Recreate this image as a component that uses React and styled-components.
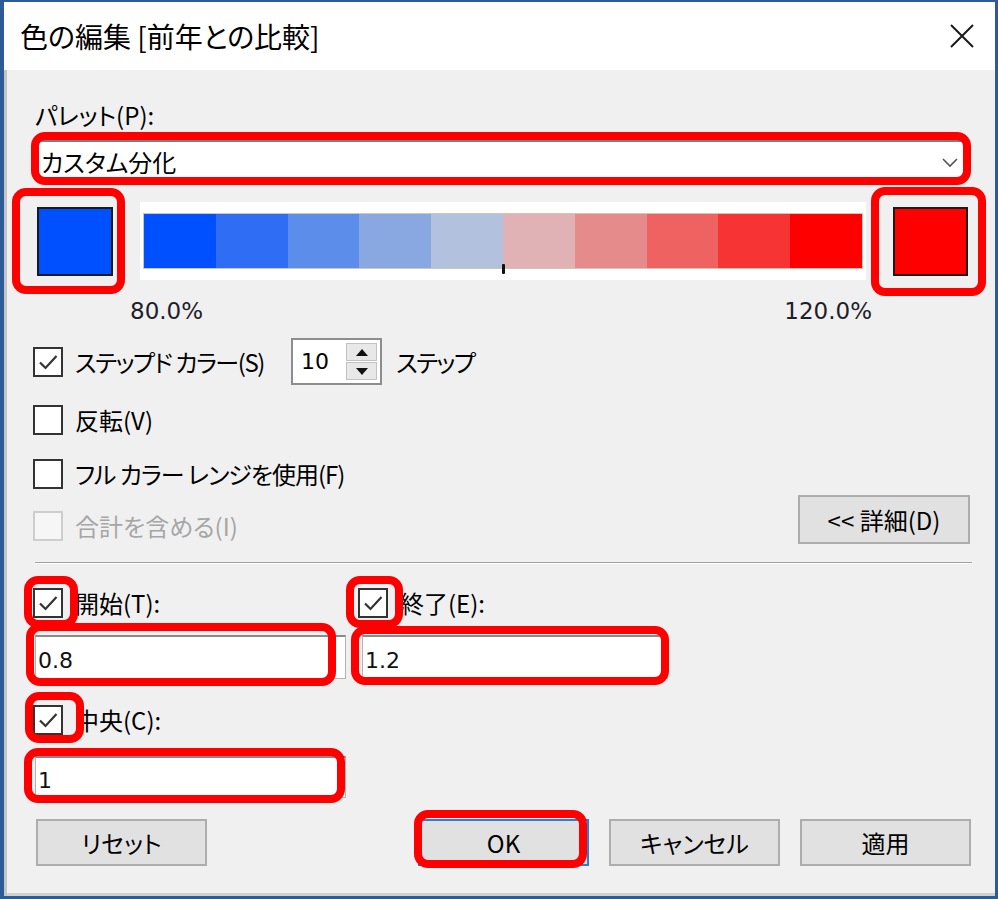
import React from 'react';
import styled, { createGlobalStyle, css } from 'styled-components';

const Global = createGlobalStyle`
  html, body { margin: 0; padding: 0; background: #ffffff; }
  body { font-family: "Noto Sans CJK JP", sans-serif; color: #000; }
  * { box-sizing: border-box; }
`;

const UI_FONT = `"Noto Sans CJK JP", "Noto Sans", sans-serif`;
const NUM_FONT = `"DejaVu Sans", "Noto Sans", sans-serif`;

/* red annotation frame drawn over an element */
const marked = css`
  position: relative;
  ${p => p.$mark && css`
    &::after {
      content: "";
      position: absolute;
      top: ${p.$mark[0]}px;
      right: ${p.$mark[1]}px;
      bottom: ${p.$mark[2]}px;
      left: ${p.$mark[3]}px;
      border: 8px solid #ff0000;
      border-radius: 14px;
      pointer-events: none;
      z-index: 5;
    }
  `}
`;

const Frame = styled.div`
  width: 998px;
  height: 899px;
  border-style: solid;
  border-color: #2b5c97;
  border-width: 2px 3px 3px 4px;
  display: flex;
  flex-direction: column;
  background: #f0f0f0;
  overflow: hidden;
`;

const TitleBar = styled.div`
  height: 68px;
  flex: none;
  background: #ffffff;
  display: flex;
  align-items: center;
  justify-content: space-between;
  padding: 0 20px 0 16px;
`;

const Title = styled.div`
  font-family: ${UI_FONT};
  font-feature-settings: "palt";
  font-size: 28px;
  line-height: 34px;
  color: #000;
`;

const Body = styled.div`
  flex: 1;
  display: flex;
  flex-direction: column;
  padding: 30px 23px 0 29px;
  font-family: ${UI_FONT};
  font-feature-settings: "palt";
  font-size: 24px;
  box-shadow: inset 3px 0 0 #c4c4c4, inset 0 -3px 0 #d0d0d0;
`;

const FieldLabel = styled.div`
  height: 30px;
  line-height: 30px;
  margin-left: 2px;
`;

const Select = styled.div`
  ${marked}
  margin: 10px 7px 0 4px;
  height: 39px;
  background: #ffffff;
  border: 1px solid #b9b9b9;
  border-top: 2px solid #7c7c7c;
  display: flex;
  align-items: flex-end;
  justify-content: space-between;
  padding: 0 6px 1px 3px;
`;

const SelectText = styled.span`
  line-height: 30px;
`;

const Chevron = styled.svg`
  width: 16px;
  height: 10px;
  margin-bottom: 9px;
`;

const ColorRow = styled.div`
  margin: 23px 4px 0 4px;
  height: 78px;
  display: flex;
  align-items: center;
  gap: 27px;
`;

const Swatch = styled.div`
  ${marked}
  width: ${p => p.$w}px;
  height: 69px;
  flex: none;
  border: 2px solid #1a1a1a;
  background: ${p => p.$color};
`;

const RampFrame = styled.div`
  position: relative;
  flex: 1;
  height: 78px;
  background: #ffffff;
  padding: 11px 3px 11px 3px;
`;

const Ramp = styled.div`
  display: flex;
  height: 56px;
  border: 1px solid #cfc6b4;
`;

const Step = styled.div`
  flex: 1;
  background: ${p => p.$color};
`;

const Tick = styled.div`
  position: absolute;
  left: calc(50% - 1px);
  top: 62px;
  width: 3px;
  height: 10px;
  border-radius: 1px;
  background: #111;
`;

const PercentRow = styled.div`
  margin-top: 16px;
  height: 30px;
  display: flex;
  justify-content: space-between;
  padding: 0 100px 0 97px;
  font-family: ${NUM_FONT};
  font-size: 23px;
  line-height: 30px;
  color: #1e1e28;
`;

const OptionRow = styled.div`
  margin-top: ${p => p.$top || 0}px;
  margin-bottom: ${p => p.$bottom || 0}px;
  height: ${p => p.$h || 30}px;
  display: flex;
  align-items: center;
`;

const Box = styled.span`
  ${marked}
  width: 30px;
  height: 30px;
  flex: none;
  border: 2px solid ${p => (p.$disabled ? '#cdcdcd' : '#333333')};
  background: ${p => (p.$disabled ? '#f6f6f6' : '#ffffff')};
  display: inline-flex;
  align-items: center;
  justify-content: center;
`;

const OptionText = styled.span`
  margin-left: 12px;
  line-height: 30px;
  white-space: nowrap;
  letter-spacing: ${p => p.$tight || 0}px;
  color: ${p => (p.$disabled ? '#a6a6a6' : '#000')};
`;

const Spinner = styled.div`
  margin-left: 27px;
  width: 91px;
  height: 47px;
  border: 2px solid #8d8d8d;
  background: #ffffff;
  display: flex;
  align-items: center;
  justify-content: space-between;
  padding: 0 3px 0 8px;
  font-family: ${NUM_FONT};
  font-size: 22px;
`;

const SpinButtons = styled.div`
  width: 31px;
  height: 37px;
  display: flex;
  flex-direction: column;
  gap: 1px;
`;

const SpinButton = styled.div`
  flex: 1;
  background: #e8e8e8;
  border: 1px solid #c2c2c2;
  display: flex;
  align-items: center;
  justify-content: center;
`;

const StepsText = styled.span`
  margin-left: 14px;
  letter-spacing: -1.5px;
`;

const DetailRow = styled.div`
  margin-top: 6px;
  height: 49px;
  display: flex;
  align-items: flex-end;
  justify-content: space-between;
`;

const Button = styled.div`
  ${marked}
  width: ${p => p.$w || 171}px;
  height: ${p => p.$h || 47}px;
  margin-right: ${p => p.$right || 0}px;
  flex: none;
  background: #e1e1e1;
  border: 2px solid ${p => (p.$primary ? '#2a7fd4' : '#adadad')};
  display: flex;
  align-items: center;
  justify-content: center;
  font-size: 24px;
  white-space: nowrap;
`;

const Separator = styled.div`
  margin: 18px 0 0 2px;
  height: 2px;
  border-top: 1px solid #a3a3a3;
  border-bottom: 1px solid #ffffff;
`;

const RangeArea = styled.div`
  margin-top: 23px;
  display: flex;
  gap: 12px;
  align-items: flex-start;
`;

const RangeColumn = styled.div`
  width: ${p => p.$w}px;
  display: flex;
  flex-direction: column;
`;

const FieldCheck = styled.div`
  margin-top: ${p => p.$top || 0}px;
  height: 32px;
  display: flex;
  align-items: center;
`;

const FieldText = styled.span`
  margin-left: 12px;
  line-height: 30px;
`;

const TextBox = styled.div`
  ${marked}
  margin-top: ${p => p.$top}px;
  margin-left: ${p => p.$indent}px;
  height: ${p => p.$h || 44}px;
  background: #ffffff;
  border: 1px solid #b3b3b3;
  border-top: 2px solid #8a8a8a;
  display: flex;
  align-items: center;
  padding: 6px 0 0 2px;
  font-family: ${NUM_FONT};
  font-size: 22px;
  color: #111;
`;

const ButtonRow = styled.div`
  margin-top: 21px;
  height: 47px;
  display: flex;
  gap: 20px;
  padding: 0 1px 0 3px;
`;

const Spacer = styled.div`
  flex: 1;
`;

const CheckBox = ({ checked, disabled, mark }) => (
  <Box $disabled={disabled} $mark={mark}>
    {checked && (
      <svg width="22" height="22" viewBox="0 0 22 22">
        <path d="M3 11.5 L8.5 17 L19.5 5" fill="none" stroke="#333" strokeWidth="2.2" />
      </svg>
    )}
  </Box>
);

const STEPS = [
  '#0050ff',
  '#2f6df4',
  '#5c8deb',
  '#89a8e2',
  '#b2c2de',
  '#e0b2b5',
  '#e68b8b',
  '#ee6262',
  '#f63434',
  '#ff0000',
];

export default function App() {
  return (
    <>
      <Global />
      <Frame>
        <TitleBar>
          <Title>色の編集 [前年との比較]</Title>
          <svg width="26" height="26" viewBox="0 0 26 26">
            <path d="M2 2 L24 24 M24 2 L2 24" stroke="#1a1a1a" strokeWidth="2" />
          </svg>
        </TitleBar>
        <Body>
          <FieldLabel>パレット(P):</FieldLabel>
          <Select $mark={[-10, -7, -7, -7]}>
            <SelectText>カスタム分化</SelectText>
            <Chevron viewBox="0 0 16 10">
              <path d="M1 1 L8 8 L15 1" fill="none" stroke="#555" strokeWidth="1.6" />
            </Chevron>
          </Select>

          <ColorRow>
            <Swatch $w={76} $color="#0050ff" $mark={[-21, -14, -20, -27]} />
            <RampFrame>
              <Ramp>
                {STEPS.map(c => (
                  <Step key={c} $color={c} />
                ))}
              </Ramp>
              <Tick />
            </RampFrame>
            <Swatch $w={75} $color="#ff0000" $mark={[-22, -20, -22, -24]} />
          </ColorRow>

          <PercentRow>
            <span>80.0%</span>
            <span>120.0%</span>
          </PercentRow>

          <OptionRow $top={12} $h={47}>
            <CheckBox checked />
            <OptionText $tight={-1.4}>ステップド カラー(S)</OptionText>
            <Spinner>
              <span>10</span>
              <SpinButtons>
                <SpinButton>
                  <svg width="12" height="7" viewBox="0 0 12 7">
                    <path d="M6 0 L12 7 L0 7 Z" fill="#111" />
                  </svg>
                </SpinButton>
                <SpinButton>
                  <svg width="12" height="7" viewBox="0 0 12 7">
                    <path d="M0 0 L12 0 L6 7 Z" fill="#111" />
                  </svg>
                </SpinButton>
              </SpinButtons>
            </Spinner>
            <StepsText>ステップ</StepsText>
          </OptionRow>

          <OptionRow $top={20}>
            <CheckBox />
            <OptionText>反転(V)</OptionText>
          </OptionRow>

          <OptionRow $top={24}>
            <CheckBox />
            <OptionText $tight={-1}>フル カラー レンジを使用(F)</OptionText>
          </OptionRow>

          <DetailRow>
            <OptionRow $bottom={3}>
              <CheckBox disabled />
              <OptionText $disabled>合計を含める(I)</OptionText>
            </OptionRow>
            <Button $w={172} $h={49} $right={2}>
              &lt;&lt; 詳細(D)
            </Button>
          </DetailRow>

          <Separator />

          <RangeArea>
            <RangeColumn $w={313}>
              <FieldCheck>
                <CheckBox checked mark={[-14, -17, -12, -11]} />
                <FieldText>開始(T):</FieldText>
              </FieldCheck>
              <TextBox $top={16} $indent={2} $mark={[-14, 9, -8, -10]}>
                0.8
              </TextBox>
              <FieldCheck $top={25}>
                <CheckBox checked mark={[-15, -23, -10, -10]} />
                <FieldText>中央(C):</FieldText>
              </FieldCheck>
              <TextBox $top={20} $indent={2} $h={42} $mark={[-10, 0, -6, -12]}>
                1
              </TextBox>
            </RangeColumn>
            <RangeColumn $w={310}>
              <FieldCheck>
                <CheckBox checked mark={[-14, -17, -12, -14]} />
                <FieldText>終了(E):</FieldText>
              </FieldCheck>
              <TextBox $top={16} $indent={4} $mark={[-11, -2, -7, -12]}>
                1.2
              </TextBox>
            </RangeColumn>
          </RangeArea>

          <ButtonRow>
            <Button>リセット</Button>
            <Spacer />
            <Button $primary $mark={[-11, 0, -4, -6]}>OK</Button>
            <Button>キャンセル</Button>
            <Button>適用</Button>
          </ButtonRow>
        </Body>
      </Frame>
    </>
  );
}
